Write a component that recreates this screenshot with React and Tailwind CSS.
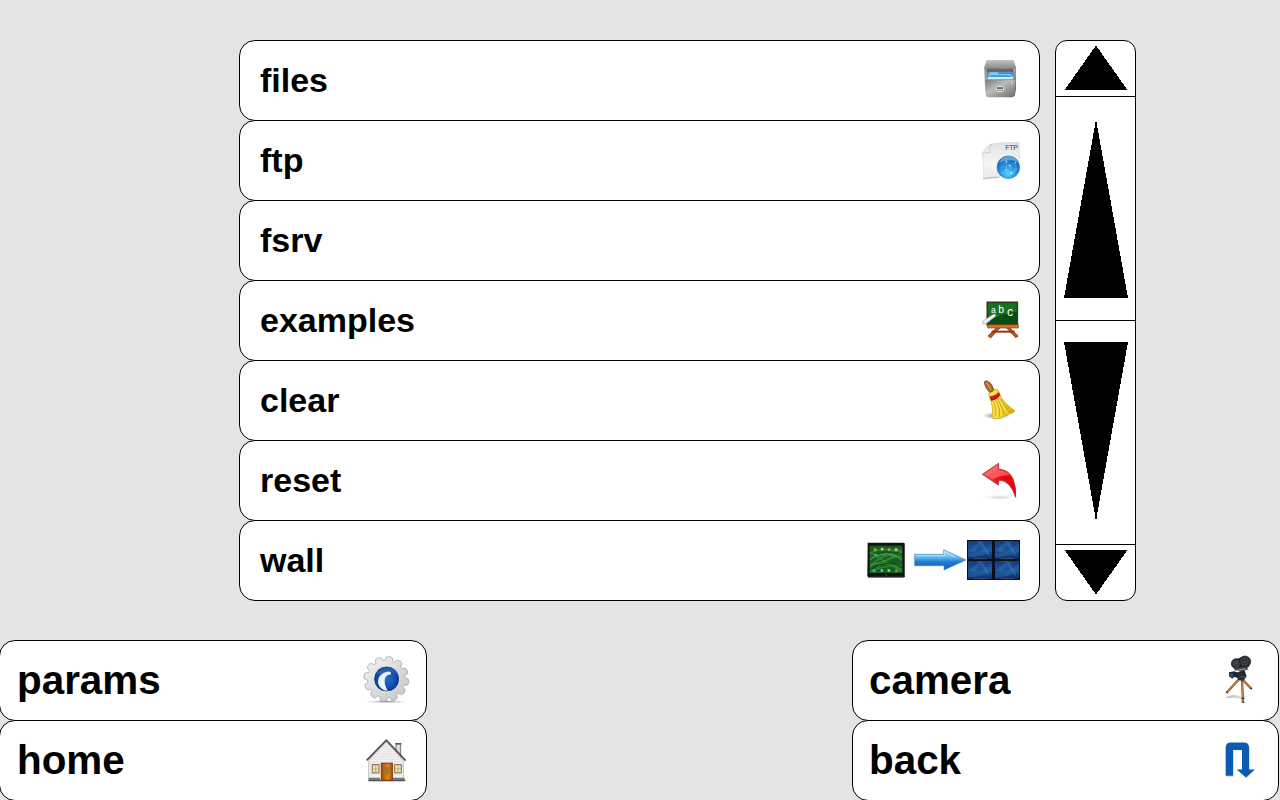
import React from "react";

const iconBox = "mt-[9px] h-[60px] w-[60px] shrink-0";

function FilesIcon() {
  return (
    <svg className={iconBox} viewBox="0 0 180 180">
      <defs>
        <linearGradient id="cab" x1="0" y1="0" x2="1" y2="1">
          <stop offset="0" stopColor="#777" /><stop offset=".45" stopColor="#b9b9b9" /><stop offset="1" stopColor="#5e5e5e" />
        </linearGradient>
        <linearGradient id="cabTop" x1="0" y1="0" x2="0" y2="1">
          <stop offset="0" stopColor="#c4c4c4" /><stop offset="1" stopColor="#888" />
        </linearGradient>
        <linearGradient id="drawer" x1="0" y1="0" x2="1" y2="1">
          <stop offset="0" stopColor="#777" /><stop offset=".4" stopColor="#bbb" /><stop offset="1" stopColor="#6b6b6b" />
        </linearGradient>
      </defs>
      <path d="M43 52 L51 30 H130 L138 52 V118 L134 138 H48 L45 118Z" fill="url(#cab)" />
      <path d="M44 50 L51 30 H130 L137 50 V56 H44Z" fill="url(#cabTop)" />
      <path d="M51 56 H130 V66 H51Z" fill="#666" />
      <path d="M53 67 H130 L132 89 H50Z" fill="#2b91da" />
      <path d="M60 67 h24 v5 h38 l8 7 H54Z" fill="#85caf4" />
      <path d="M54 80 H130 V88 H52Z" fill="#c9ebfb" />
      <path d="M60 76 H121 V80 H58Z" fill="#3a93d8" />
      <path d="M46 90 H136 L133 136 Q132 142 126 142 H55 Q49 142 48 136Z" fill="url(#drawer)" />
      <rect x="79" y="110" width="22" height="14" rx="3" fill="#666" stroke="#eee" strokeWidth="3" />
      <rect x="82" y="117" width="16" height="4" fill="#ddd" />
      <rect x="123" y="94" width="3" height="9" fill="#ddd" />
    </svg>
  );
}

function FtpIcon() {
  return (
    <svg className={iconBox} viewBox="0 0 180 180">
      <defs>
        <linearGradient id="paper" x1="0" y1="0" x2="0" y2="1">
          <stop offset="0" stopColor="#e2e2e2" /><stop offset=".6" stopColor="#f6f6f6" /><stop offset="1" stopColor="#e8e8e8" />
        </linearGradient>
        <radialGradient id="globe" cx=".5" cy=".8" r=".75">
          <stop offset="0" stopColor="#54d0fa" /><stop offset=".5" stopColor="#238edb" /><stop offset="1" stopColor="#1763b5" />
        </radialGradient>
      </defs>
      <path d="M37 72 L64 42 Q100 36 147 37 Q151 80 143 110 Q110 142 40 147 Q44 110 37 72Z" fill="url(#paper)" stroke="#ccc" strokeWidth="1.5" />
      <path d="M37 72 Q47 63 60 69 Q55 52 66 42 Q50 45 37 72Z" fill="#eee" stroke="#aaa" strokeWidth="1.3" />
      <path d="M40 145 Q65 139 90 141 L88 145 Q65 143 40 148Z" fill="#aaa" opacity=".6" />
      <text x="106" y="59" textLength="38" fontFamily="'Liberation Sans', sans-serif" fontWeight="400" fontSize="21" fill="#444">FTP</text>
      <circle cx="115" cy="112" r="34" fill="url(#globe)" stroke="#236bb3" strokeWidth="1.5" />
      <path d="M88 99 Q94 80 116 79 Q138 80 144 99 Q130 87 116 91 Q99 90 88 99Z" fill="#9bc8ec" opacity=".6" />
      <path d="M94 112 L109 94 L119 107 L136 98 L139 119 L124 130 L109 120 L94 129Z M109 94 L109 120 M119 107 L124 130 L139 119 L119 107 L94 112 M94 129 L124 130" fill="none" stroke="#a3e5ff" strokeWidth="1.1" opacity=".7" />
      <g fill="#b9ecff"><circle cx="109" cy="94" r="2.5" /><circle cx="119" cy="107" r="2.5" /><circle cx="136" cy="98" r="2" /><circle cx="124" cy="130" r="3" /><circle cx="109" cy="120" r="2.5" /></g>
    </svg>
  );
}

function BoardIcon() {
  return (
    <svg className={iconBox} viewBox="0 0 180 180">
      <path d="M79 113 L54 138 L62 144 L91 113Z M109 113 L137 143 L145 138 L119 113Z" fill="#b75b25" stroke="#71300d" strokeWidth="2" />
      <path d="M65 125 H134" stroke="#873d13" strokeWidth="6" />
      <rect x="51" y="36" width="92" height="70" fill="#064e15" stroke="#482b19" strokeWidth="3" />
      <path d="M54 39 H140 V65 Q94 70 54 93Z" fill="#157021" />
      <path d="M53 104 H145 V114 H53Z" fill="#d27631" stroke="#863d12" strokeWidth="2" />
      <path d="M44 90 L69 73 Q78 69 78 77 L53 98 Q41 106 37 99 Q36 94 44 90Z" fill="#f6f6f6" stroke="#777" strokeWidth="1.5" />
      <path d="M48 98 L76 79" stroke="#c4c4c4" strokeWidth="2.5" />
      <g fill="#fff" fontWeight="400" fontFamily="'Liberation Sans', sans-serif">
        <text x="63" y="69" fontSize="26">a</text><text x="85" y="70" fontSize="31">b</text><text x="111" y="77" fontSize="37">c</text>
      </g>
    </svg>
  );
}

function BroomIcon() {
  return (
    <svg className={iconBox} viewBox="0 0 180 180">
      <defs>
        <radialGradient id="broomShade"><stop offset="0" stopColor="#555" stopOpacity=".8" /><stop offset="1" stopColor="#777" stopOpacity="0" /></radialGradient>
        <linearGradient id="straw"><stop offset="0" stopColor="#ffe84b" /><stop offset=".5" stopColor="#efd12b" /><stop offset="1" stopColor="#cfa507" /></linearGradient>
      </defs>
      <ellipse cx="80" cy="137" rx="43" ry="11" fill="url(#broomShade)" />
      <path d="M56 69 L76 58 Q86 57 89 72 Q98 97 135 123 Q127 132 118 130 Q114 139 101 138 Q93 149 78 145 Q68 149 66 140 Q72 108 56 78Z" fill="url(#straw)" stroke="#c29c0b" strokeWidth="2" />
      <path d="M70 92 Q82 121 75 140 M77 91 Q93 117 87 140 M83 88 Q99 117 101 135 M89 85 Q104 112 119 126" stroke="#b99009" strokeWidth="2" fill="none" />
      <path d="M73 91 Q86 118 80 143 M80 89 Q96 117 94 136 M86 85 Q102 111 112 129" stroke="#fff38a" strokeWidth="2" fill="none" />
      <path d="M59 79 Q72 80 86 67 L91 75 Q79 92 63 92Z" fill="#b9111e" />
      <path d="M62 83 Q75 84 87 72" stroke="#e23a3a" strokeWidth="2" fill="none" />
      <path d="M43 39 Q42 31 52 33 Q66 40 71 57 Q70 66 60 67 Q48 59 43 39Z" fill="#a96c2c" stroke="#6e4219" strokeWidth="2" />
      <path d="M50 38 L63 60" stroke="#d79d54" strokeWidth="4" />
    </svg>
  );
}

function ResetIcon() {
  return (
    <svg className={iconBox} viewBox="0 0 180 180">
      <defs>
        <linearGradient id="red" x1="0" y1="0" x2=".7" y2="1"><stop offset="0" stopColor="#ff7b7b" /><stop offset=".5" stopColor="#ed2f35" /><stop offset="1" stopColor="#e80008" /></linearGradient>
        <radialGradient id="redShade"><stop offset="0" stopColor="#bbb" stopOpacity=".65" /><stop offset="1" stopColor="#ddd" stopOpacity="0" /></radialGradient>
      </defs>
      <ellipse cx="88" cy="142" rx="52" ry="8" fill="url(#redShade)" />
      <path d="M37 73 L86 40 V57 Q118 60 129 87 Q139 110 137 142 Q122 92 87 90 L85 105Z" fill="url(#red)" stroke="#a12a30" strokeWidth="2.5" />
      <path d="M43 73 L82 46 V61 Q105 60 118 74 Q92 76 72 87Z" fill="#ff7577" opacity=".5" />
      <path d="M72 87 Q94 76 119 76 Q132 92 134 128 Q118 90 84 87 L82 98Z" fill="#e60009" opacity=".8" />
    </svg>
  );
}

function TabletIcon() {
  const apps = [[45, 58, "#dab13d"], [66, 57, "#e2d9c6"], [87, 58, "#d9a83a"], [108, 58, "#f3e7b8"], [46, 75, "#75a8a0"], [41, 121, "#5aaed6"], [65, 121, "#87d4e4"], [86, 121, "#f0d66e"], [109, 122, "#df7a33"]];
  return (
    <g>
      <path d="M23 38 H130 L135 41 V140 L130 143 H25 L22 138Z" fill="#101315" />
      <path d="M134 42 V139" stroke="#888" strokeWidth="2" />
      <path d="M24 142 H133" stroke="#949494" strokeWidth="2" />
      <rect x="29" y="47" width="98" height="82" fill="#17601f" />
      <path d="M30 70 Q65 48 126 66 M30 90 Q76 45 126 92 M30 80 Q72 76 126 58 M30 112 Q75 55 126 88 M30 103 Q77 91 126 119 M40 128 Q74 82 126 77 M30 66 Q75 96 126 125 M30 124 Q77 105 126 106" fill="none" stroke="#2f8a36" strokeWidth="4" />
      <path d="M31 88 Q78 57 125 85 M31 106 Q75 97 126 66" fill="none" stroke="#6bb558" strokeWidth="1.5" />
      <path d="M30 82 Q72 55 125 75 M31 119 Q78 85 125 110" fill="none" stroke="#0e421a" strokeWidth="2.5" />
      {apps.map(([x, y, color]) => <rect key={`${x}-${y}`} x={x - 3.5} y={y - 3.5} width="8" height="8" rx="2" fill={color} opacity=".8" />)}
      <circle cx="79" cy="135" r="3" fill="#3b4040" />
    </g>
  );
}

function Screen({ x, y }) {
  return (
    <g transform={`translate(${x} ${y})`}>
      <rect width="72" height="54" fill="url(#screenBlue)" />
      <path d="M0 43 Q37 40 72 15 V29 Q38 51 0 49Z" fill="#2865ac" opacity=".5" />
      <path d="M5 27 Q26 2 57 0 Q31 11 20 35Z M35 0 Q52 9 65 49 Q42 22 25 0Z" fill="#3377b9" opacity=".4" />
      <path d="M0 40 Q37 42 72 10 M35 0 Q50 16 62 40" stroke="#70a0c9" strokeWidth="1.2" fill="none" opacity=".6" />
      <path d="M17 53 H57" stroke="#778" strokeWidth="2" strokeDasharray="3 1" />
    </g>
  );
}

function WallIcon() {
  return (
    <svg className="mt-[9px] h-[60px] w-[170px] shrink-0" viewBox="0 0 510 180">
      <defs>
        <linearGradient id="wallArrow" x1="0" y1="0" x2="0" y2="1"><stop offset="0" stopColor="#b4e8fc" /><stop offset=".35" stopColor="#6cc0f0" /><stop offset=".6" stopColor="#227bd0" /><stop offset="1" stopColor="#125aae" /></linearGradient>
        <linearGradient id="screenBlue" x1="0" y1="0" x2="0" y2="1"><stop offset="0" stopColor="#143b7b" /><stop offset=".55" stopColor="#1c559e" /><stop offset="1" stopColor="#102b62" /></linearGradient>
      </defs>
      <TabletIcon />
      <path d="M164 73 H251 V59 L318 90 L252 120 V107 H164Z" fill="url(#wallArrow)" stroke="#3d87bf" strokeWidth="2" />
      <path d="M168 77 H254 V65 L284 80" fill="none" stroke="#d1f3ff" strokeWidth="2" />
      <rect x="321" y="30" width="159" height="120" fill="#0a101e" />
      <Screen x={324} y={33} /><Screen x={405} y={33} /><Screen x={324} y={93} /><Screen x={405} y={93} />
    </svg>
  );
}

const gearPath = Array.from({ length: 12 }, (_, i) =>
  [[-11, 57], [-8, 66], [0, 68], [8, 66], [11, 57], [15, 56]].map(([offset, radius]) => {
    const angle = ((i * 30 + offset - 82) * Math.PI) / 180;
    return `${94 + Math.cos(angle) * radius},${102 + Math.sin(angle) * radius}`;
  }).join(" ")
).join(" ");

function ParamsIcon() {
  return (
    <svg className="mr-[11px] mt-[4px] h-[60px] w-[60px] shrink-0 overflow-visible" viewBox="0 0 180 180">
      <defs>
        <linearGradient id="gear" x1="0" y1="0" x2="1" y2="1"><stop offset="0" stopColor="#f5f5f5" /><stop offset="1" stopColor="#c2c2c2" /></linearGradient>
        <radialGradient id="gearBlue"><stop offset="0" stopColor="#236fcf" /><stop offset=".6" stopColor="#1553b2" /><stop offset="1" stopColor="#0b347f" /></radialGradient>
        <radialGradient id="gearShade"><stop offset="0" stopColor="#666" stopOpacity=".75" /><stop offset="1" stopColor="#aaa" stopOpacity="0" /></radialGradient>
      </defs>
      <ellipse cx="94" cy="170" rx="65" ry="5" fill="url(#gearShade)" />
      <polygon points={gearPath} fill="url(#gear)" stroke="#999" strokeWidth="2" strokeLinejoin="round" />
      <circle cx="95" cy="102" r="39" fill="url(#gearBlue)" stroke="#f2f2f2" strokeWidth="3" />
      <path d="M61 90 Q77 60 111 69 Q126 72 129 91 Q107 73 90 83Z" fill="#5f94dc" opacity=".3" />
      <path d="M98 80 Q109 78 108 88 Q89 91 89 107 Q89 124 99 137 Q85 138 75 126 Q64 111 73 95 Q83 81 98 80Z" fill="#edf3fb" />
    </svg>
  );
}

function HomeIcon() {
  return (
    <svg className="mr-[11px] mt-[9px] h-[60px] w-[60px] shrink-0" viewBox="0 0 180 180">
      <defs><linearGradient id="door"><stop offset="0" stopColor="#a34609" /><stop offset=".6" stopColor="#ed8918" /><stop offset="1" stopColor="#b64a08" /></linearGradient></defs>
      <g transform="translate(0 7) scale(1 1.065)">
        <path d="M123 52 V33 H137 V71" fill="#ddd" stroke="#777" strokeWidth="3" />
        <path d="M121 32 H139" stroke="#555" strokeWidth="4" />
        <path d="M41 79 L94 25 L145 80 V136 H41Z" fill="#f1f1f1" stroke="#aaa" strokeWidth="2" />
        <path d="M91 34 H98 M83 41 H105 M77 48 H111 M70 55 H118 M63 62 H125 M56 69 H132 M49 76 H139 M43 83 H143 M43 90 H143 M43 97 H143 M43 104 H143 M43 111 H143 M43 118 H143" stroke="#d2d2d2" strokeWidth="1.5" />
        <path d="M35 79 L94 22 L152 80" stroke="#505050" strokeWidth="5" fill="none" />
        <path d="M42 77 L94 27 L146 78" stroke="#999" strokeWidth="2" fill="none" />
        <path d="M41 128 H75 V137 H41Z M113 128 H149 V137 H113Z" fill="#777" />
        <path d="M40 136 H151" stroke="#555" strokeWidth="3" />
        <rect x="79" y="87" width="33" height="48" fill="url(#door)" stroke="#753a12" strokeWidth="3" />
        <rect x="89" y="97" width="14" height="22" rx="2" fill="#9d7920" />
        {[[52, 91], [119, 91]].map(([x, y]) => <g key={x}><rect x={x} y={y} width="20" height="23" fill="#eee6b9" stroke="#85704b" strokeWidth="3" /><path d={`M${x + 10} ${y} v23 M${x} ${y + 12} h20`} stroke="#b19a64" strokeWidth="2" /></g>)}
      </g>
    </svg>
  );
}

function CameraIcon() {
  return (
    <svg className="mr-[8px] mt-[4px] h-[60px] w-[60px] shrink-0" viewBox="0 0 180 180">
      <defs><linearGradient id="camShade"><stop offset="0" stopColor="#888" stopOpacity=".6" /><stop offset="1" stopColor="#999" stopOpacity=".1" /></linearGradient></defs>
      <path d="M50 156 Q72 144 94 155 L125 149 L98 163 L75 158 L48 160Z" fill="url(#camShade)" />
      <path d="M87 103 L51 142 M97 103 L123 130 M96 103 L99 170" stroke="#7a5531" strokeWidth="7" />
      <path d="M87 103 L51 142 M97 103 L123 130 M96 103 L99 168" stroke="#c48346" strokeWidth="4" />
      <path d="M48 140 L53 145 M121 128 L126 133 M95 170 L103 173 M94 160 H103" stroke="#453b32" strokeWidth="4" />
      <path d="M79 84 L103 74 L110 94 L100 108 L84 105Z" fill="#252a2c" />
      <path d="M57 82 L73 79 L87 84 L86 99 L72 96 L67 101 L57 94Z" fill="#1b2832" />
      <path d="M58 84 L69 86 L69 97 L59 93Z" fill="#1e5484" />
      <path d="M74 45 L100 34 L117 65 L90 78 L74 70Z" fill="#2c3335" />
      <circle cx="79" cy="56" r="15" fill="#2b3234" stroke="#111" strokeWidth="2" />
      <ellipse cx="105" cy="50" rx="17" ry="17" fill="#2a3133" stroke="#101213" strokeWidth="2" />
      <path d="M72 68 L110 66 L115 73 L92 80 L73 74Z" fill="#3a4143" />
      <path d="M77 77 L107 71" stroke="#a7acae" strokeWidth="3" />
      <circle cx="79" cy="56" r="8" fill="none" stroke="#4a5153" strokeWidth="3" /><circle cx="104" cy="50" r="10" fill="none" stroke="#454c4f" strokeWidth="3" />
      <circle cx="79" cy="56" r="2" fill="#858988" /><circle cx="104" cy="50" r="2.5" fill="#666b6a" />
      <path d="M88 96 H107" stroke="#555e62" strokeWidth="3" />
    </svg>
  );
}

function BackIcon() {
  return (
    <svg className="mr-[8px] mt-[9px] h-[60px] w-[60px] shrink-0" viewBox="0 0 180 180">
      <g transform="translate(0 6) scale(1 1.04)">
        <path d="M49 129 V47 Q49 33 63 33 H103 Q119 33 119 48 V109 H136 L110 134 L84 109 H98 V53 H71 V129Z" fill="#aaa" opacity=".5" />
        <path d="M47 126 V45 Q47 30 62 30 H102 Q117 30 117 45 V108 H134 L108 131 L80 108 H96 V52 H69 V126Z" fill="#0b5bb3" />
      </g>
    </svg>
  );
}

const menu = [
  ["files", FilesIcon], ["ftp", FtpIcon], ["fsrv", null], ["examples", BoardIcon],
  ["clear", BroomIcon], ["reset", ResetIcon], ["wall", WallIcon],
];

function MenuRow({ label, Icon }) {
  return (
    <button className="-mt-px flex h-[81px] w-full items-start justify-between rounded-[16px] border border-black bg-white pl-[20px] pr-[9px] text-left text-[34px] leading-[79px] first:mt-0">
      <span>{label}</span>{Icon && <Icon />}
    </button>
  );
}

function NavGroup({ items, edge }) {
  return (
    <nav className={edge === "left" ? "-ml-px w-[428px]" : "mr-px w-[427px]"}>
      {items.map(([label, Icon]) => (
        <button key={label} className={`-mt-px flex h-[81px] w-full items-start justify-between rounded-[16px] border border-black bg-white text-left text-[40.4px] leading-[79px] first:mt-0 ${edge === "left" ? "pl-[17px]" : "pl-[16px]"}`}>
          <span>{label}</span><Icon />
        </button>
      ))}
    </nav>
  );
}

function ScrollButton({ points, height, className }) {
  return (
    <button className={`block w-full ${className}`}>
      <svg className="block w-[79px]" height={height} viewBox={`0 0 79 ${height}`} shapeRendering="crispEdges"><polygon points={points} /></svg>
    </button>
  );
}

export default function App() {
  return (
    <main className="h-[800px] w-[1280px] overflow-hidden bg-[#e4e4e4] pt-[40px] font-['Liberation_Sans',Arial,sans-serif] font-bold text-black">
      <div className="ml-[239px] flex h-[561px] gap-[15px]">
        <section className="w-[801px]">{menu.map(([label, Icon]) => <MenuRow key={label} label={label} Icon={Icon} />)}</section>
        <aside className="h-[561px] w-[81px] overflow-hidden rounded-[12px] border border-black bg-white">
          <ScrollButton height={55} points="40,4.5 8.5,49 71.5,49" className="h-[55px]" />
          <ScrollButton height={223} points="39,28 40,22 41,28 72,201 8,201" className="h-[224px] border-t border-black" />
          <ScrollButton height={223} points="8,21 72,21 41,194 40,202 39,194" className="h-[224px] border-t border-black" />
          <ScrollButton height={55} points="8.5,5 71.5,5 40,49.5" className="h-[56px] border-t border-black" />
        </aside>
      </div>
      <div className="mt-[39px] flex justify-between">
        <NavGroup edge="left" items={[["params", ParamsIcon], ["home", HomeIcon]]} />
        <NavGroup edge="right" items={[["camera", CameraIcon], ["back", BackIcon]]} />
      </div>
    </main>
  );
}
